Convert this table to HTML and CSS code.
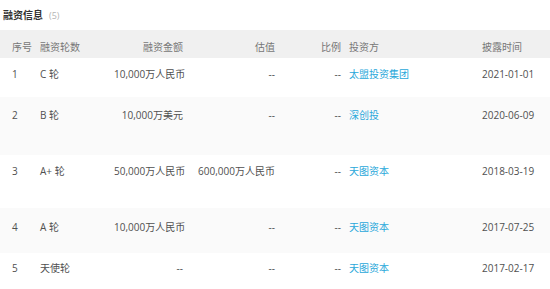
FILE: index.html
```html
<!DOCTYPE html>
<html lang="zh-CN">
<head>
<meta charset="utf-8">
<title>融资信息</title>
<link rel="stylesheet" href="styles.css">
</head>
<body>
<div class="section">
  <div class="title"><span class="title-text">融资信息</span><span class="count">(5)</span></div>
  <div class="table">
    <div class="row head">
      <div class="c c1">序号</div>
      <div class="c c2">融资轮数</div>
      <div class="c c3">融资金额</div>
      <div class="c c4">估值</div>
      <div class="c c5">比例</div>
      <div class="c c6">投资方</div>
      <div class="c c7">披露时间</div>
    </div>
    <div class="row r1">
      <div class="c c1">1</div>
      <div class="c c2">C 轮</div>
      <div class="c c3">10,000万人民币</div>
      <div class="c c4">--</div>
      <div class="c c5">--</div>
      <div class="c c6"><a class="link">太盟投资集团</a></div>
      <div class="c c7">2021-01-01</div>
    </div>
    <div class="row r2 stripe">
      <div class="c c1">2</div>
      <div class="c c2">B 轮</div>
      <div class="c c3">10,000万美元</div>
      <div class="c c4">--</div>
      <div class="c c5">--</div>
      <div class="c c6"><a class="link">深创投</a></div>
      <div class="c c7">2020-06-09</div>
    </div>
    <div class="row r3">
      <div class="c c1">3</div>
      <div class="c c2">A+ 轮</div>
      <div class="c c3">50,000万人民币</div>
      <div class="c c4">600,000万人民币</div>
      <div class="c c5">--</div>
      <div class="c c6"><a class="link">天图资本</a></div>
      <div class="c c7">2018-03-19</div>
    </div>
    <div class="row r4 stripe">
      <div class="c c1">4</div>
      <div class="c c2">A 轮</div>
      <div class="c c3">10,000万人民币</div>
      <div class="c c4">--</div>
      <div class="c c5">--</div>
      <div class="c c6"><a class="link">天图资本</a></div>
      <div class="c c7">2017-07-25</div>
    </div>
    <div class="row r5">
      <div class="c c1">5</div>
      <div class="c c2">天使轮</div>
      <div class="c c3">--</div>
      <div class="c c4">--</div>
      <div class="c c5">--</div>
      <div class="c c6"><a class="link">天图资本</a></div>
      <div class="c c7">2017-02-17</div>
    </div>
  </div>
</div>
</body>
</html>
```
FILE: styles.css
```css
html, body {
  margin: 0;
  padding: 0;
  background: #ffffff;
}
body {
  font-family: "Open Sans", "Noto Sans CJK SC", sans-serif;
  font-size: 10px;
  line-height: 14px;
  color: #505050;
  width: 550px;
  overflow: hidden;
}
.title {
  height: 30px;
  box-sizing: border-box;
  padding: 8px 0 0 3px;
  display: flex;
  align-items: baseline;
  gap: 6px;
}
.title-text {
  font-weight: bold;
  color: #333333;
}
.count {
  color: #b5b5b5;
  font-size: 9px;
}
.row {
  display: grid;
  grid-template-columns: 36px 74px 77px 92px 66px 133px 72px;
  box-sizing: border-box;
  align-items: start;
}
.c {
  padding: 0 4px;
  white-space: nowrap;
}
.c1 { padding-left: 12px; }
.c3, .c4, .c5 { text-align: right; }
.head {
  background: #f0f0f0;
  height: 28px;
  padding-top: 10px;
  color: #777777;
}
.stripe { background: #fafafa; }
.r1 { height: 39px; padding-top: 9px; }
.r2 { height: 58px; padding-top: 11px; }
.r3 { height: 53px; padding-top: 9px; }
.r4 { height: 45px; padding-top: 12px; }
.r5 { height: 40px; padding-top: 8px; }
.link {
  color: #2aa8da;
  text-decoration: none;
}
```
